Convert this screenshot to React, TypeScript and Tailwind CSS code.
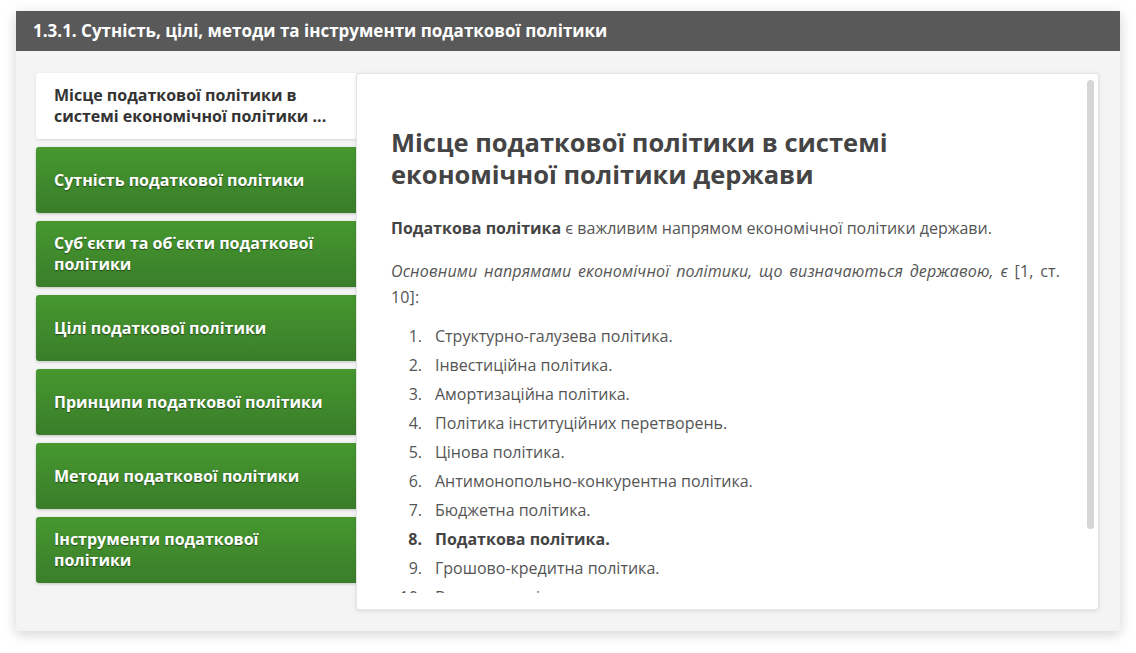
import React from 'react';

const tabs = [
  'Сутність податкової політики',
  'Суб˙єкти та об˙єкти податкової політики',
  'Цілі податкової політики',
  'Принципи податкової політики',
  'Методи податкової політики',
  'Інструменти податкової політики'
];

const items = [
  'Структурно-галузева політика.',
  'Інвестиційна політика.',
  'Амортизаційна політика.',
  'Політика інституційних перетворень.',
  'Цінова політика.',
  'Антимонопольно-конкурентна політика.',
  'Бюджетна політика.',
  'Податкова політика.',
  'Грошово-кредитна політика.',
  'Валютна політика.'
];

export default function App() {
  return (
    <div
      className="w-[1136px] h-[653px] bg-white pt-[11px] pl-[16px]"
      style={{ fontFamily: '"Open Sans", "Noto Sans", sans-serif' }}
    >
      <div className="w-[1104px] h-[620px] flex flex-col bg-[#f4f4f4] shadow-[0_3px_12px_rgba(0,0,0,0.18)]">
        {/* header */}
        <div className="h-[40px] bg-[#595959] flex items-center px-[17px] shrink-0">
          <h1 className="text-white font-bold text-[17px]">
            1.3.1. Сутність, цілі, методи та інструменти податкової політики
          </h1>
        </div>

        {/* body */}
        <div className="flex-1 min-h-0 flex pt-[22px] pl-[20px] pr-[21px] pb-[21px]">
          {/* tabs */}
          <div className="w-[320px] flex flex-col gap-[8px] shrink-0">
            <div className="h-[66px] bg-white rounded-l-[3px] pl-[18px] pr-2 flex items-center shadow-[0_1px_3px_rgba(0,0,0,0.12)]">
              <span className="text-[#333] font-bold text-[16px] leading-[21px]">
                Місце податкової політики в
                <br />
                системі економічної політики ...
              </span>
            </div>
            {tabs.map((t) => (
              <div
                key={t}
                className="h-[66px] rounded-l-[3px] pl-[18px] pr-4 flex items-center bg-gradient-to-b from-[#46982f] to-[#3a7d2a] shadow-[0_1px_3px_rgba(0,0,0,0.2)]"
              >
                <span className="text-white font-bold text-[16px] leading-[21px] [text-shadow:0_1px_1px_rgba(0,0,0,0.45)]">
                  {t === 'Суб˙єкти та об˙єкти податкової політики' ? (
                    <>
                      Суб˙єкти та об˙єкти податкової
                      <br />
                      політики
                    </>
                  ) : t === 'Інструменти податкової політики' ? (
                    <>
                      Інструменти податкової
                      <br />
                      політики
                    </>
                  ) : (
                    t
                  )}
                </span>
              </div>
            ))}
          </div>

          {/* content panel */}
          <div className="flex-1 min-h-0 relative bg-white rounded-[3px] border border-[#e4e4e4] shadow-[0_1px_4px_rgba(0,0,0,0.1)] flex flex-col pt-[6px] pb-[16px]">
            <div className="flex-1 min-h-0 overflow-hidden pl-[34px] pr-[38px] pt-[46px]">
              <h2 className="text-[#444] font-bold text-[25.5px] leading-[32px]">
                Місце податкової політики в системі
                <br />
                економічної політики держави
              </h2>
              <p className="mt-[25px] text-[16px] leading-[26px] text-[#555]">
                <b className="text-[#444]">Податкова політика</b> є важливим напрямом економічної
                політики держави.
              </p>
              <p className="mt-[17px] text-[16px] leading-[26px] text-[#555] text-justify tracking-[0.15px]">
                <i>Основними напрямами економічної політики, що визначаються державою, є</i> [1, ст.
                10]:
              </p>
              <ol className="mt-[13px] flex flex-col gap-[3px]">
                {items.map((it, i) => (
                  <li
                    key={it}
                    className={`flex text-[16px] leading-[26px] ${
                      i === 7 ? 'font-bold text-[#444]' : 'text-[#555]'
                    }`}
                  >
                    <span className="w-[31px] text-right shrink-0">{i + 1}.</span>
                    <span className="ml-[13px]">{it}</span>
                  </li>
                ))}
              </ol>
            </div>
            {/* scrollbar thumb */}
            <div className="absolute right-[4px] top-[6px] w-[7px] h-[449px] rounded-full bg-[#d6d6d6]" />
          </div>
        </div>
      </div>
    </div>
  );
}
